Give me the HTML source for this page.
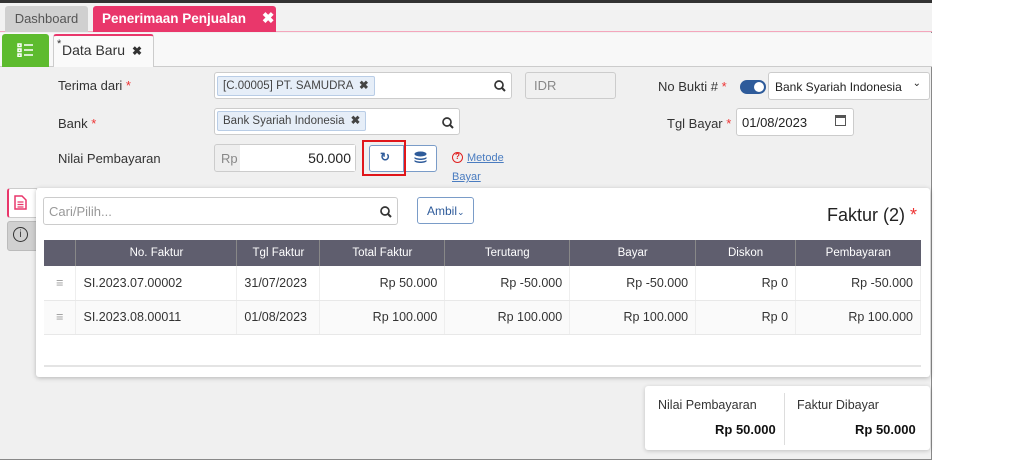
<!DOCTYPE html>
<html><head><style>
*{box-sizing:border-box;margin:0;padding:0}
body{width:1024px;height:462px;overflow:hidden;background:#fff;font-family:"Liberation Sans",sans-serif;font-size:13px;color:#333;position:relative}
.a{position:absolute}
.app{left:0;top:0;width:932px;height:460px;background:#f0f0f0;border-right:1px solid #888;border-bottom:1px solid #888}
.inp{position:absolute;background:#fff;border:1px solid #ccc;border-radius:3px}
.tag{position:absolute;background:#e6eef8;border:1px solid #b9cde6;border-radius:2px;font-size:11.5px;color:#444;padding:2px 5px;height:20px;line-height:15px}
.lbl{position:absolute;font-size:13px;color:#333}
.req{color:#e33}
table{border-collapse:collapse;position:absolute;left:44px;top:240px;width:877px;font-size:12.5px}
th{background:#5f5e6e;color:#fff;font-weight:normal;height:26px;border-right:1px solid #888;font-size:11.5px}
td{height:34px;border-right:1px solid #eee;border-bottom:1px solid #e8e8e8;padding:0 7px}
td.r{text-align:right}
</style></head><body>
<div class="a app"></div>
<div class="a" style="left:0;top:0;width:932px;height:3px;background:#333"></div>
<div class="a" style="left:0;top:3px;width:932px;height:29px;background:#f2f2f2;border-bottom:1px solid #f4a6bc"></div>
<div class="a" style="left:5px;top:6px;width:83px;height:26px;background:#d0d0d0;border-radius:3px 3px 0 0;color:#555;font-size:13px;line-height:26px;text-align:center">Dashboard</div>
<div class="a" style="left:93px;top:6px;width:183px;height:26px;background:#e9376b;border-radius:3px 3px 0 0;color:#fff;font-size:13.5px;font-weight:bold;line-height:26px;padding-left:9px">Penerimaan Penjualan <span style="margin-left:12px;font-size:15px">✖</span></div>
<div class="a" style="left:0;top:33px;width:932px;height:34px;background:#f8f8f8;border-bottom:1px solid #ccc"></div>
<div class="a" style="left:2px;top:34px;width:47px;height:33px;background:#5dbb2e;border-radius:3px 3px 0 0"></div>
<svg class="a" style="left:17px;top:43px" width="17" height="14"><g fill="none" stroke="#fff" stroke-width="1.5"><rect x="1" y="1" width="3" height="2.5"/><rect x="1" y="6" width="3" height="2.5"/><rect x="1" y="11" width="3" height="2.5"/><path d="M7 2h9M7 7h9M7 12h9"/></g></svg>
<div class="a" style="left:53px;top:34px;width:101px;height:33px;background:#fafafa;border:1px solid #ccc;border-top:2px solid #e9376b;border-bottom:none;border-radius:3px 3px 0 0;font-size:14px;line-height:28px;padding-left:8px;color:#333"><sup style="position:absolute;left:3px;top:-6px;font-size:11px">*</sup>Data Baru <span style="font-size:12px;font-weight:bold;margin-left:3px">✖</span></div>

<div class="lbl" style="left:58px;top:78px">Terima dari <span class="req">*</span></div>
<div class="inp" style="left:214px;top:72px;width:298px;height:27px"></div>
<div class="tag" style="left:217px;top:76px">[C.00005] PT. SAMUDRA <b style="margin-left:3px">✖</b></div>
<svg class="a" style="left:494px;top:80px" width="12" height="12"><circle cx="5" cy="5" r="4" fill="none" stroke="#333" stroke-width="1.7"/><path d="M8 8l3 3" stroke="#333" stroke-width="2"/></svg>
<div class="inp" style="left:525px;top:72px;width:91px;height:27px;background:#f0f0f0;color:#888;padding:5px 8px">IDR</div>
<div class="lbl" style="left:658px;top:79px">No Bukti # <span class="req">*</span></div>
<div class="a" style="left:740px;top:80px;width:26px;height:14px;background:#2e5b9a;border-radius:7px"><div class="a" style="right:2px;top:2px;width:10px;height:10px;background:#fff;border-radius:50%"></div></div>
<div class="inp" style="left:768px;top:72px;width:162px;height:28px;font-size:12px;padding:7px 6px;color:#222">Bank Syariah Indonesia<span class="a" style="right:8px;top:5px;font-size:10px">⌄</span></div>

<div class="lbl" style="left:58px;top:116px">Bank <span class="req">*</span></div>
<div class="inp" style="left:214px;top:108px;width:246px;height:27px"></div>
<div class="tag" style="left:217px;top:111px">Bank Syariah Indonesia <b style="margin-left:3px">✖</b></div>
<svg class="a" style="left:442px;top:117px" width="12" height="12"><circle cx="5" cy="5" r="4" fill="none" stroke="#333" stroke-width="1.7"/><path d="M8 8l3 3" stroke="#333" stroke-width="2"/></svg>
<div class="lbl" style="left:667px;top:116px">Tgl Bayar <span class="req">*</span></div>
<div class="inp" style="left:736px;top:108px;width:118px;height:28px;padding:6px 5px;color:#222">01/08/2023<span class="a" style="right:7px;top:6px;width:11px;height:11px;border:1px solid #555;border-top:3px solid #555"></span></div>

<div class="lbl" style="left:58px;top:151px">Nilai Pembayaran</div>
<div class="inp" style="left:214px;top:144px;width:142px;height:28px;background:#eee"></div>
<div class="a" style="left:221px;top:151px;color:#888">Rp</div>
<div class="a" style="left:240px;top:145px;width:115px;height:26px;background:#fff;text-align:right;padding:5px 4px;font-size:14px;color:#222">50.000</div>
<div class="inp" style="left:369px;top:145px;width:68px;height:27px;border-color:#7a9cc8"></div>
<div class="a" style="left:403px;top:145px;width:1px;height:27px;background:#7a9cc8"></div>
<div class="a" style="left:380px;top:150px;color:#2e5b9a;font-size:12px;font-weight:bold">↻</div>
<svg class="a" style="left:414px;top:151px" width="13" height="12"><g fill="#2e5b9a"><ellipse cx="6.5" cy="3" rx="6" ry="2.5"/><path d="M0.5 6c2 2 10 2 12 0v1.5c-2 2-10 2-12 0z M0.5 9c2 2 10 2 12 0v1.5c-2 2-10 2-12 0z"/></g></svg>
<div class="a" style="left:362px;top:140px;width:44px;height:36px;border:2px solid #e0161b"></div>
<div class="a" style="left:452px;top:152px;width:11px;height:11px;border:1.5px solid #e02020;border-radius:50%;color:#e02020;font-size:8px;font-weight:bold;text-align:center;line-height:8px">?</div>
<div class="a" style="left:467px;top:152px;color:#4a7cc0;font-size:11px;text-decoration:underline">Metode</div>
<div class="a" style="left:452px;top:171px;color:#4a7cc0;font-size:11px;text-decoration:underline">Bayar</div>

<div class="a" style="left:7px;top:188px;width:30px;height:30px;background:#fff;border:1px solid #ccc;border-left:2px solid #e9376b;border-radius:3px 0 0 3px"></div>
<svg class="a" style="left:14px;top:195px" width="13" height="15"><path d="M1 1h7l4 4v9H1z" fill="none" stroke="#e9376b" stroke-width="1.5"/><path d="M3.5 7h6M3.5 9.5h6M3.5 12h6" stroke="#e9376b" stroke-width="1.2"/></svg>
<div class="a" style="left:7px;top:221px;width:30px;height:30px;background:#d0d0d0;border:1px solid #bbb;border-radius:3px 0 0 3px"></div>
<div class="a" style="left:13px;top:227px;width:15px;height:15px;border:1.3px solid #333;border-radius:50%;text-align:center;font-size:10px;line-height:13px;color:#333">i</div>

<div class="a" style="left:36px;top:188px;width:894px;height:189px;background:#fff;box-shadow:0 1px 5px rgba(0,0,0,.25);border-radius:3px"></div>
<div class="inp" style="left:43px;top:197px;width:355px;height:28px;color:#999;padding:6px 5px;font-size:13px">Cari/Pilih...</div>
<svg class="a" style="left:380px;top:206px" width="12" height="12"><circle cx="5" cy="5" r="4" fill="none" stroke="#333" stroke-width="1.7"/><path d="M8 8l3 3" stroke="#333" stroke-width="2"/></svg>
<div class="inp" style="left:417px;top:197px;width:57px;height:27px;border-color:#7a9cc8;color:#2e5b9a;font-size:12px;padding:6px 9px">Ambil<span style="font-size:9px">⌄</span></div>
<div class="a" style="left:827px;top:205px;font-size:18px;color:#222">Faktur (2) <span class="req">*</span></div>

<table>
<tr><th style="width:32px"></th><th style="width:161px">No. Faktur</th><th style="width:83px">Tgl Faktur</th><th style="width:125px">Total Faktur</th><th style="width:125px">Terutang</th><th style="width:126px">Bayar</th><th style="width:100px">Diskon</th><th style="width:125px;border-right:none">Pembayaran</th></tr>
<tr><td style="color:#999;text-align:center">≡</td><td>SI.2023.07.00002</td><td>31/07/2023</td><td class="r">Rp 50.000</td><td class="r">Rp -50.000</td><td class="r">Rp -50.000</td><td class="r">Rp 0</td><td class="r">Rp -50.000</td></tr>
<tr style="background:#fafafa"><td style="color:#999;text-align:center">≡</td><td>SI.2023.08.00011</td><td>01/08/2023</td><td class="r">Rp 100.000</td><td class="r">Rp 100.000</td><td class="r">Rp 100.000</td><td class="r">Rp 0</td><td class="r">Rp 100.000</td></tr>
</table>
<div class="a" style="left:44px;top:365px;width:877px;height:2px;background:#e4e4e4"></div>

<div class="a" style="left:645px;top:386px;width:285px;height:64px;background:#fff;border-radius:3px;box-shadow:0 1px 4px rgba(0,0,0,.2)"></div>
<div class="a" style="left:784px;top:393px;width:1px;height:52px;background:#ddd"></div>
<div class="a" style="left:658px;top:398px;font-size:12.5px">Nilai Pembayaran</div>
<div class="a" style="left:715px;top:422px;font-size:13px;font-weight:bold;color:#111">Rp 50.000</div>
<div class="a" style="left:797px;top:398px;font-size:12.5px">Faktur Dibayar</div>
<div class="a" style="left:855px;top:422px;font-size:13px;font-weight:bold;color:#111">Rp 50.000</div>
</body></html>
